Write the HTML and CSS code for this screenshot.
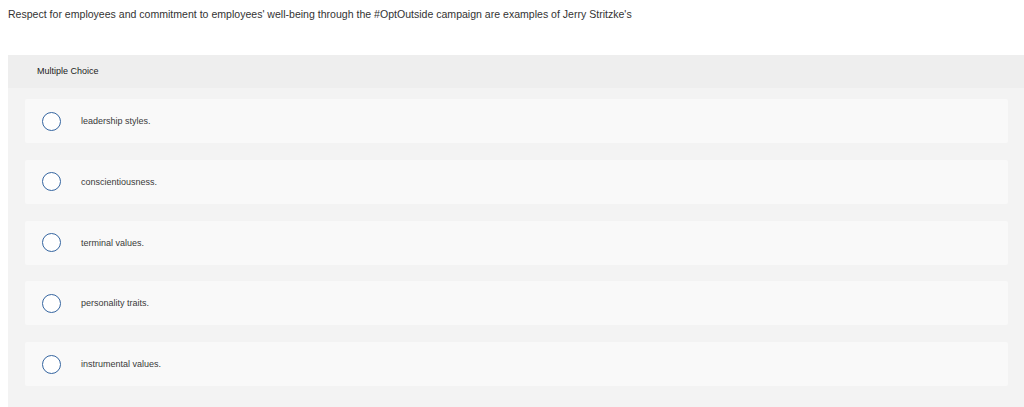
FILE: index.html
```html
<!DOCTYPE html>
<html lang="en">
<head>
<meta charset="utf-8">
<title>Multiple Choice</title>
<link rel="stylesheet" href="styles.css">
</head>
<body>
<p class="question">Respect for employees and commitment to employees' well-being through the #OptOutside campaign are examples of Jerry Stritzke's</p>
<div class="panel">
  <div class="panel-header">Multiple Choice</div>
  <div class="options">
    <div class="option"><span class="radio"></span><span class="label">leadership styles.</span></div>
    <div class="option"><span class="radio"></span><span class="label">conscientiousness.</span></div>
    <div class="option"><span class="radio"></span><span class="label">terminal values.</span></div>
    <div class="option"><span class="radio"></span><span class="label">personality traits.</span></div>
    <div class="option"><span class="radio"></span><span class="label">instrumental values.</span></div>
  </div>
</div>
</body>
</html>
```
FILE: styles.css
```css
html, body {
  margin: 0;
  padding: 0;
  background: #ffffff;
  overflow: hidden;
}
body {
  font-family: "Liberation Sans", Arial, sans-serif;
  color: #333333;
  padding: 0 0 0 8px;
}
.question {
  margin: 0;
  padding-top: 8px;
  height: 55px;
  box-sizing: border-box;
  font-size: 10.55px;
  line-height: 12px;
  color: #333333;
}
.panel {
  background: #f3f3f3;
  height: 360px;
}
.panel-header {
  background: #eeeeee;
  height: 33px;
  box-sizing: border-box;
  padding: 11px 0 0 29px;
  font-size: 9px;
  line-height: 11px;
  color: #222222;
}
.options {
  display: flex;
  flex-direction: column;
  gap: 16.75px;
  padding: 11px 16px 0 17px;
}
.option {
  height: 44px;
  background: #f9f9f9;
  border-radius: 2px;
  display: flex;
  align-items: center;
}
.radio {
  width: 17px;
  height: 17px;
  border: 1px solid #3565a0;
  border-radius: 50%;
  background: #ffffff;
  margin-left: 17px;
  flex: none;
}
.label {
  margin-left: 20px;
  font-size: 9px;
  color: #3a3a3a;
}
```
